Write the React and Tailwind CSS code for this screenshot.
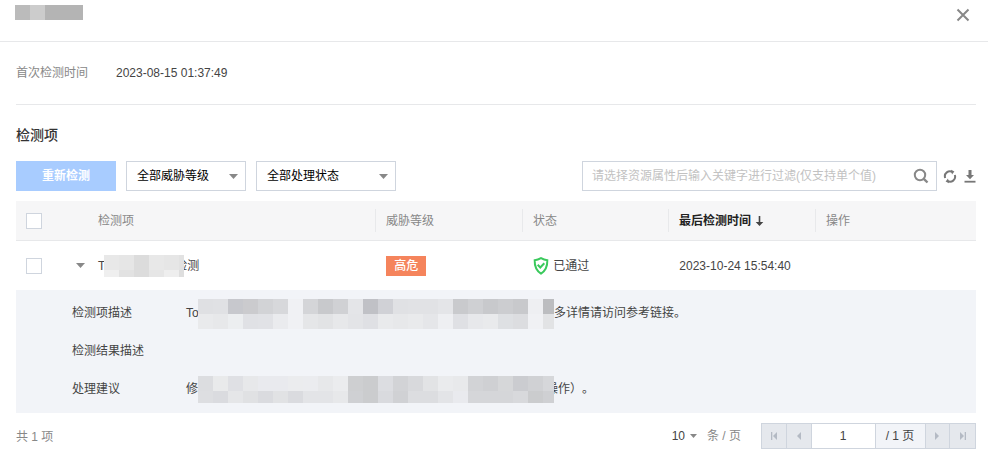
const FONT = "font-['Liberation_Sans','Noto_Sans_CJK_SC',sans-serif]";

const DESC = [
  ["#dfe0e3","#e0e1e4","#c7c8cd","#cbcbce","#d2d3d6","#d7d8db","#f0f1f4","#d4d5d8","#c8c9cc","#d0d1d4","#e4e5e8","#c0c1c6","#d0d1d6","#e0e1e4","#e1e2e5","#e1e2e5","#e4e5e8","#c9cacd","#cfd0d3","#c8c9cc","#cccdd0","#c8c9cc","#eeeff2","#bcbdc0"],
  ["#e9eaec","#e7e8ea","#eceef0","#e0e1e5","#e1e2e6","#eaebee","#f0f1f4","#e5e6e8","#e2e3e5","#e7e8ea","#e3e4e7","#dfe0e4","#e9eaec","#e7e8ea","#e9eaec","#e5e6e9","#eeeff2","#dfe0e4","#e7e8eb","#e9eaec","#dee0e3","#dcdde0","#f0f1f4","#e2e3e5"],
];
const SUGGEST = [
  ["#dcdde0","#e9eaeb","#dfe0e4","#e7e8ea","#e9eaee","#e9eaee","#ebecee","#ebecef","#e7e8ea","#ebecee","#cecfd1","#cbccce","#dcdde1","#d2d3d6","#d8d9dc","#e2e3e5","#eaebed","#e8e9eb","#d2d3d6","#cfd0d3","#d6d7d9","#cbccd0","#d0d1d4","#d6d7da"],
  ["#dddee1","#dadbdf","#e5e6e8","#e0e1e3","#dadbdf","#e1e2e4","#dadbdf","#e3e4e7","#e3e4e7","#e7e8ea","#cfd0d3","#cbccce","#d9dade","#d0d1d4","#dcdde0","#dcdde0","#e3e4e7","#e9eaee","#d5d6d9","#d5d6d9","#d5d6d9","#d8d9dc","#cbccce","#cfd0d3"],
];
const NAME = [
  ["#e8e8e8","#e6e6e6","#dcdcdc","#e8e8e8","#e6e6e6","#e2e2e2"],
  ["#efefef","#e2e2e2","#dcdcdc","#e6e6e6","#eeeeee","#dedede"],
];

function Mosaic({ rows, width, heights, cell = 15 }) {
  return (
    <div className="relative z-10 flex flex-col overflow-hidden shrink-0" style={{ width }}>
      {rows.map((row, r) => (
        <div key={r} className="flex shrink-0" style={{ height: heights[r] }}>
          {row.map((c, i) => (
            <div key={i} className="shrink-0" style={{ width: cell, backgroundColor: c }} />
          ))}
        </div>
      ))}
    </div>
  );
}

function Caret({ className = "", w = 9, h = 5 }) {
  return (
    <svg width={w} height={h} viewBox="0 0 9 5" preserveAspectRatio="none" className={className}>
      <path d="M0 0h9L4.5 5z" fill="currentColor" />
    </svg>
  );
}

function Select({ label, width }) {
  return (
    <div className={`h-[30px] ${width} border border-[#cfd5de] flex items-center justify-between pl-[10px] pr-[7px] text-[#000000]`}>
      <span>{label}</span>
      <Caret className="text-[#888888]" />
    </div>
  );
}

function Check() {
  return <div className="w-4 h-4 border border-[#cfd5de] bg-white shrink-0" />;
}

function HeadCell({ width, children, className = "" }) {
  return (
    <div className={`${width} h-full flex items-center shrink-0`}>
      <div className={`h-[23px] border-l border-[#e8e9eb] pl-[10px] flex items-center ${className}`}>{children}</div>
    </div>
  );
}

function PageBtn({ children }) {
  return (
    <div className="w-[25px] h-full bg-[#e5e8ed] border-r border-[#cfd5de] last:border-r-0 flex items-center justify-center text-[#b4bac4]">
      {children}
    </div>
  );
}

function DetailRow({ label, children }) {
  return (
    <div className="flex items-center h-[38px] text-[#444444]">
      <div className="w-[170px] pl-[56px] shrink-0 whitespace-nowrap">{label}</div>
      {children}
    </div>
  );
}

export default function App() {
  return (
    <div className={`w-[988px] h-[468px] bg-white overflow-hidden text-[12px] leading-[18px] [text-spacing-trim:space-all] ${FONT}`}>
      {/* title bar */}
      <div className="h-[42px] border-b border-[#e7e8ea] flex justify-between pl-[15px] pr-[18px]">
        <div className="flex h-[15px] mt-[5px]">
          <div className="w-[15px] bg-[#bbbbbb]" />
          <div className="w-[15px] bg-[#cccccc]" />
          <div className="w-[38px] bg-[#b4b4b4]" />
        </div>
        <svg width="14" height="14" viewBox="0 0 14 14" className="mt-[8px] text-[#888888]">
          <path d="M1.5 1.5l11 11M12.5 1.5l-11 11" stroke="currentColor" strokeWidth="2" fill="none" />
        </svg>
      </div>

      <div className="pl-4 pr-3">
        {/* first detected */}
        <div className="h-[63px] border-b border-[#e7e8ea] flex items-center pb-[1px]">
          <span className="w-[100px] text-[#888888]">首次检测时间</span>
          <span className="text-[#444444]">2023-08-15 01:37:49</span>
        </div>

        <div className="mt-[20px] h-[20px] text-[14px] leading-[20px] font-medium text-[#333333]">检测项</div>

        {/* toolbar */}
        <div className="mt-[16px] flex items-center h-[30px]">
          <div className="w-[100px] h-[30px] bg-[#a8ccff] text-white flex items-center justify-center font-semibold">重新检测</div>
          <div className="ml-[10px]"><Select label="全部威胁等级" width="w-[120px]" /></div>
          <div className="ml-[10px]"><Select label="全部处理状态" width="w-[140px]" /></div>
          <div className="ml-auto w-[355px] h-[30px] border border-[#cfd5de] flex items-center justify-between pl-[9px] pr-[7px]">
            <span className="text-[#c2c2c2]">请选择资源属性后输入关键字进行过滤(仅支持单个值)</span>
            <svg width="16" height="16" viewBox="0 0 16 16" className="text-[#888888]">
              <circle cx="7" cy="7" r="5.2" stroke="currentColor" strokeWidth="2" fill="none" />
              <path d="M10.8 10.8l3.7 3.7" stroke="currentColor" strokeWidth="2.4" fill="none" />
            </svg>
          </div>
          <svg width="14" height="15" viewBox="0 0 14 14" className="ml-[6px] text-[#777777]">
            <path d="M2.2 8.5A5 5 0 0 1 9.6 2.6" stroke="currentColor" strokeWidth="2" fill="none" />
            <path d="M8 0.3l3.4 1.6L9 5z" fill="currentColor" />
            <path d="M11.8 5.5A5 5 0 0 1 4.4 11.4" stroke="currentColor" strokeWidth="2" fill="none" />
            <path d="M6 13.7L2.6 12.1 5 9z" fill="currentColor" />
          </svg>
          <svg width="12" height="14" viewBox="0 0 12 14" className="ml-[7px] text-[#777777]">
            <path d="M4.5 1h3v5h2.500L6 10.200 2 6h2.500z" fill="currentColor" />
            <path d="M0.500 11.800h11v1.800H0.500z" fill="currentColor" />
          </svg>
        </div>

        {/* table head */}
        <div className="mt-[10px] h-[40px] bg-[#f6f6f7] border-b border-[#e7e8ea] flex items-center text-[#888888]">
          <div className="w-[82px] pl-[10px] shrink-0"><Check /></div>
          <div className="w-[277px] shrink-0">检测项</div>
          <HeadCell width="w-[147px]">威胁等级</HeadCell>
          <HeadCell width="w-[146px]">状态</HeadCell>
          <HeadCell width="w-[147px]" className="font-semibold text-[#222222]">
            最后检测时间
            <svg width="9" height="10" viewBox="0 0 9 10" className="ml-[4px] text-[#444444]">
              <path d="M3.700 0h1.600v6h3L4.500 10 .7 6h3z" fill="currentColor" />
            </svg>
          </HeadCell>
          <HeadCell width="w-[100px]">操作</HeadCell>
        </div>

        {/* table row */}
        <div className="h-[49px] flex items-center text-[#444444]">
          <div className="w-[60px] pl-[10px] shrink-0"><Check /></div>
          <Caret className="text-[#888888] shrink-0" />
          <span className="ml-[13px]">T</span>
          <div className="ml-[-1px]"><Mosaic rows={NAME} width={80} heights={[15, 7]} /></div>
          <span className="ml-[-9px] w-[211px] overflow-hidden whitespace-nowrap">检测</span>
          <div className="w-[147px] shrink-0">
            <span className="block h-[20px] w-[40px] bg-[#f5845c] text-white text-center leading-[20px] font-medium">高危</span>
          </div>
          <div className="w-[146px] shrink-0 flex items-center">
            <svg width="16" height="18" viewBox="0 0 16 18" className="shrink-0">
              <path d="M8 1.200c2 1.200 4 1.900 6.300 2 .2 5.600-1 10-6.300 13.400C2.700 13.200 1.500 8.800 1.700 3.200 4 3.100 6 2.400 8 1.200z" fill="none" stroke="#3ac95c" strokeWidth="2" />
              <path d="M4.700 7.800l2.600 2.700 4-4.200" fill="none" stroke="#3ac95c" strokeWidth="2" />
            </svg>
            <span className="ml-[4px]">已通过</span>
          </div>
          <span>2023-10-24 15:54:40</span>
        </div>

        {/* expanded */}
        <div className="h-[123px] bg-[#f2f4f8] pt-[4px]">
          <DetailRow label="检测项描述">
            <span className="w-[12px] whitespace-nowrap">To</span>
            <div className="mt-[2px]"><Mosaic rows={DESC} width={356} heights={[15, 15]} /></div>
            <span>多详情请访问参考链接。</span>
          </DetailRow>
          <DetailRow label="检测结果描述" />
          <DetailRow label="处理建议">
            <span className="w-[12px]">修</span>
            <div className="mt-[1px]"><Mosaic rows={SUGGEST} width={356} heights={[15, 12]} /></div>
            <span className="ml-[-8px]">操作）。</span>
          </DetailRow>
        </div>

        {/* footer */}
        <div className="mt-[10px] h-[26px] flex items-center text-[#888888]">
          <span className="mt-[1px]">共 1 项</span>
          <div className="ml-auto flex items-center">
            <span className="text-[#444444]">10</span>
            <Caret className="ml-[5px] text-[#888888]" w={7} h={4} />
            <span className="ml-[10px]">条 / 页</span>
          </div>
          <div className="ml-[20px] w-[215px] h-[26px] border border-[#cfd5de] flex">
            <PageBtn>
              <svg width="8" height="8" viewBox="0 0 8 8"><path d="M1 0h1.300v8H1zM7 0v8L3 4z" fill="currentColor" /></svg>
            </PageBtn>
            <PageBtn>
              <svg width="6" height="8" viewBox="0 0 6 8"><path d="M5 0v8L1 4z" fill="currentColor" /></svg>
            </PageBtn>
            <div className="w-[64px] h-full bg-white border-r border-[#cfd5de] flex items-center justify-center text-[#444444] shrink-0">1</div>
            <div className="w-[50px] h-full bg-[#f2f4f8] border-r border-[#cfd5de] flex items-center justify-center text-[#444444] shrink-0">/ 1 页</div>
            <PageBtn>
              <svg width="6" height="8" viewBox="0 0 6 8"><path d="M1 0v8l4-4z" fill="currentColor" /></svg>
            </PageBtn>
            <PageBtn>
              <svg width="8" height="8" viewBox="0 0 8 8"><path d="M1 0v8l4-4zM5.700 0H7v8H5.700z" fill="currentColor" /></svg>
            </PageBtn>
          </div>
        </div>
      </div>
    </div>
  );
}
